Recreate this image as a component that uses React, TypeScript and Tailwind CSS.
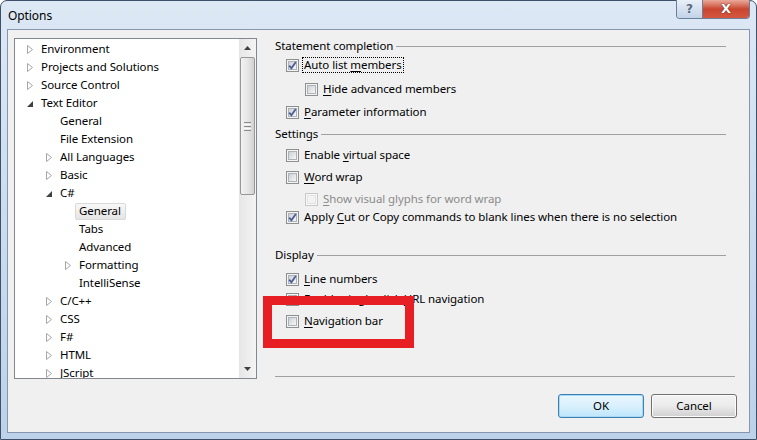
import React from "react";

type Node = {
  label: string;
  level: number;
  state?: "open" | "closed";
  selected?: boolean;
};

const TREE: Node[] = [
  { label: "Environment", level: 0, state: "closed" },
  { label: "Projects and Solutions", level: 0, state: "closed" },
  { label: "Source Control", level: 0, state: "closed" },
  { label: "Text Editor", level: 0, state: "open" },
  { label: "General", level: 1 },
  { label: "File Extension", level: 1 },
  { label: "All Languages", level: 1, state: "closed" },
  { label: "Basic", level: 1, state: "closed" },
  { label: "C#", level: 1, state: "open" },
  { label: "General", level: 2, selected: true },
  { label: "Tabs", level: 2 },
  { label: "Advanced", level: 2 },
  { label: "Formatting", level: 2, state: "closed" },
  { label: "IntelliSense", level: 2 },
  { label: "C/C++", level: 1, state: "closed" },
  { label: "CSS", level: 1, state: "closed" },
  { label: "F#", level: 1, state: "closed" },
  { label: "HTML", level: 1, state: "closed" },
  { label: "JScript", level: 1, state: "closed" },
];

const INDENT = ["pl-[10px]", "pl-[29px]", "pl-[48px]"];

function Expander({ state }: { state?: "open" | "closed" }) {
  if (state === "closed") {
    return (
      <svg width="6" height="9" viewBox="0 0 6 9" className="ml-[2px]">
        <polygon points="0.5,0.5 5.5,4.5 0.5,8.5" fill="#fff" stroke="#a6a6a6" />
      </svg>
    );
  }
  if (state === "open") {
    return (
      <svg width="6" height="6" viewBox="0 0 6 6" className="ml-[2px] mt-[2px]">
        <polygon points="6,0 6,6 0,6" fill="#404040" />
      </svg>
    );
  }
  return null;
}

function TreeRow({ node }: { node: Node }) {
  return (
    <div className={`flex h-[18px] items-center ${INDENT[node.level]}`}>
      <span className="flex w-[16px] items-center">
        <Expander state={node.state} />
      </span>
      {node.selected ? (
        <span className="-ml-[4px] flex h-[17px] items-center rounded-[2px] border border-[#d9d9d9] bg-gradient-to-b from-[#f8f8f8] to-[#e5e5e5] pl-[3px] pr-[4px]">
          {node.label}
        </span>
      ) : (
        <span>{node.label}</span>
      )}
    </div>
  );
}

function Scrollbar() {
  return (
    <div className="flex w-[17px] shrink-0 flex-col bg-gradient-to-r from-[#e6e6e6] to-[#f4f4f4]">
      <div className="flex h-[18px] items-center justify-center">
        <svg width="7" height="4" viewBox="0 0 7 4">
          <polygon points="3.5,0 7,4 0,4" fill="#404040" />
        </svg>
      </div>
      <div className="mx-[1px] flex h-[138px] items-center justify-center rounded-[2px] border border-[#979797] bg-gradient-to-r from-[#f2f2f2] via-[#e6e6e6] to-[#d2d2d2]">
        <div className="flex flex-col gap-[1px]">
          <div className="h-px w-[7px] bg-[#8a8a8a]" />
          <div className="h-px w-[7px] bg-[#fafafa]" />
          <div className="h-px w-[7px] bg-[#8a8a8a]" />
          <div className="h-px w-[7px] bg-[#fafafa]" />
          <div className="h-px w-[7px] bg-[#8a8a8a]" />
        </div>
      </div>
      <div className="flex-1" />
      <div className="flex h-[18px] items-center justify-center">
        <svg width="7" height="4" viewBox="0 0 7 4">
          <polygon points="0,0 7,0 3.5,4" fill="#404040" />
        </svg>
      </div>
    </div>
  );
}

function Box({ checked, disabled }: { checked?: boolean; disabled?: boolean }) {
  return (
    <span
      className={`relative flex h-[13px] w-[13px] shrink-0 items-center justify-center border ${
        disabled ? "border-[#c9c9c9] bg-[#f7f7f7]" : "border-[#8e8f8f] bg-[#f4f4f4]"
      }`}
    >
      <span
        className={`h-[9px] w-[9px] border ${
          disabled
            ? "border-[#e3e3e3] bg-[#f3f3f3]"
            : "border-[#aeb3b9] bg-gradient-to-br from-[#cdd0d4] to-[#f7f7f7]"
        }`}
      />
      {checked && (
        <svg width="11" height="11" viewBox="0 0 11 11" className="absolute left-[0px] top-[0px]">
          <path d="M2.2 5.6 L4.4 8.2 L8.8 1.9" fill="none" stroke="#4a5f97" strokeWidth="1.8" />
        </svg>
      )}
    </span>
  );
}

type Label = [string, string, string];

function Check({
  label,
  checked,
  disabled,
  indent,
  focused,
  className,
}: {
  label: Label;
  checked?: boolean;
  disabled?: boolean;
  indent?: boolean;
  focused?: boolean;
  className: string;
}) {
  return (
    <div
      className={`flex h-[18px] items-center gap-[3px] ${indent ? "pl-[30px]" : "pl-[11px]"} ${className} ${
        disabled ? "text-[#8b8b8b]" : ""
      }`}
    >
      <Box checked={checked} disabled={disabled} />
      <span className={focused ? "border border-dotted border-black px-[1px] leading-[14px]" : "px-[2px]"}>
        {label[0]}
        <span className="underline underline-offset-[2px]">{label[1]}</span>
        {label[2]}
      </span>
    </div>
  );
}

function Group({ title, className }: { title: string; className: string }) {
  return (
    <div className={`flex h-[18px] items-center pr-[9px] ${className}`}>
      <span>{title}</span>
      <div className="ml-[3px] h-px flex-1 bg-[#a0a0a0]" />
    </div>
  );
}

function Button({ children, primary }: { children: React.ReactNode; primary?: boolean }) {
  return (
    <div
      className={`flex h-[24px] w-[86px] items-center justify-center rounded-[3px] border ${
        primary
          ? "border-[#3c7fb1] bg-gradient-to-b from-[#eaf6fd] via-[#d9f0fc] to-[#bee6fd] shadow-[inset_0_0_0_1px_#a7d9f5]"
          : "border-[#707070] bg-gradient-to-b from-[#f2f2f2] via-[#ebebeb] to-[#cfcfcf] shadow-[inset_0_0_0_1px_#fcfcfc]"
      }`}
    >
      {children}
    </div>
  );
}

export default function App() {
  return (
    <div className="relative h-[440px] w-[757px] overflow-hidden bg-white font-['Noto_Sans',sans-serif] text-[11.5px] tracking-[-0.08px] text-black">
      <div className="flex h-full w-full flex-col rounded-t-[7px] border border-[#3f5068] bg-gradient-to-b from-[#dde8f5] via-[#cbdcef] to-[#bcd2ea]">
        {/* title bar */}
        <div className="flex h-[28px] items-start">
          <span className="ml-[7px] mt-[6px] text-[12px]">Options</span>
          <div className="flex-1" />
          <div className="mr-[6px] flex h-[19px] -mt-px overflow-hidden rounded-b-[4px] border border-t-0 border-[#6d7f98]">
            <div className="flex w-[26px] items-center justify-center border-r border-[#6d7f98] bg-gradient-to-b from-[#e9f0f8] to-[#c2d3e7] font-['DejaVu_Sans',sans-serif] text-[12px] font-bold text-[#5a6a80]">
              ?
            </div>
            <div className="flex w-[46px] items-center justify-center bg-gradient-to-b from-[#e9a99b] via-[#c9452f] to-[#d6573f] font-['DejaVu_Sans',sans-serif] text-[13px] font-bold text-white [text-shadow:0_0_1px_#5a1a10,0_0_1px_#5a1a10]">
              X
            </div>
          </div>
        </div>

        {/* client area */}
        <div className="mx-[6px] mb-[6px] flex flex-1 flex-col border border-[#8596ad] bg-[#f0f0f0]">
          <div className="flex items-start pl-[6px] pt-[8px]">
            <div className="flex h-[341px] w-[243px] shrink-0 border border-[#828790] bg-white">
              <div className="flex-1 overflow-hidden pt-[1px]">
                {TREE.map((n, i) => (
                  <TreeRow key={i} node={n} />
                ))}
              </div>
              <Scrollbar />
            </div>

            <div className="-mt-[1px] ml-[18px] flex h-[341px] w-[460px] flex-col">
              <Group title="Statement completion" className="" />
              <Check label={["Auto list ", "m", "embers"]} checked focused className="mt-[1px]" />
              <Check label={["", "H", "ide advanced members"]} indent className="mt-[6px]" />
              <Check label={["", "P", "arameter information"]} checked className="mt-[5px]" />
              <Group title="Settings" className="mt-[4px]" />
              <Check label={["Enable ", "v", "irtual space"]} className="mt-[3px]" />
              <Check label={["", "W", "ord wrap"]} className="mt-[4px]" />
              <Check label={["", "S", "how visual glyphs for word wrap"]} disabled indent className="mt-[4px]" />
              <Check
                label={["Apply ", "C", "ut or Copy commands to blank lines when there is no selection"]}
                checked
                className="mt-0"
              />
              <Group title="Display" className="mt-[20px]" />
              <Check label={["", "L", "ine numbers"]} checked className="mt-[6px]" />
              <Check label={["Enable single-click ", "U", "RL navigation"]} checked className="mt-[2px]" />
              <Check label={["", "N", "avigation bar"]} className="mt-[4px]" />
              <div className="mt-auto mb-[1px] h-px w-full bg-[#a0a0a0]" />
            </div>
          </div>

          <div className="mt-[15px] flex justify-end gap-[7px] pr-[12px]">
            <Button primary>OK</Button>
            <Button>Cancel</Button>
          </div>
        </div>
      </div>

      {/* annotation overlay */}
      <div className="absolute left-[263px] top-[296px] h-[52px] w-[151px] border-[9px] border-[#e81e25]" />
    </div>
  );
}
